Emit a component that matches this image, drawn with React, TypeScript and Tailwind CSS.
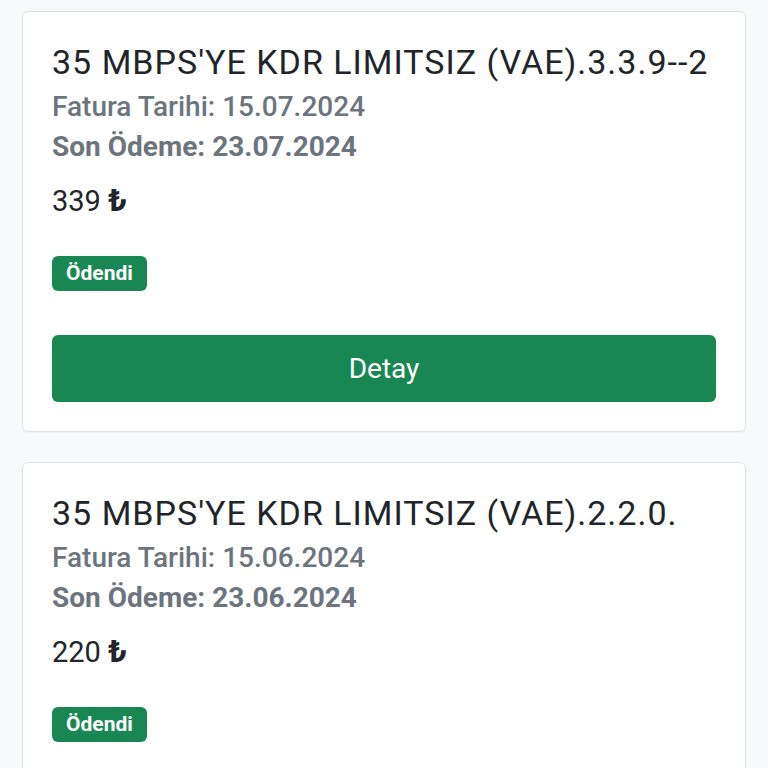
import React from "react";

type Bill = { title: string; fatura: string; son: string; amount: string };

const bills: Bill[] = [
  { title: "35 MBPS'YE KDR LIMITSIZ (VAE).3.3.9--2", fatura: "15.07.2024", son: "23.07.2024", amount: "339" },
  { title: "35 MBPS'YE KDR LIMITSIZ (VAE).2.2.0.", fatura: "15.06.2024", son: "23.06.2024", amount: "220" },
];

function Card({ b }: { b: Bill }) {
  return (
    <div className="bg-white border border-[#dee2e6] rounded-[6px] px-[29px] pt-[30px] pb-[29px] shadow-[0_1px_2px_rgba(0,0,0,0.04)]">
      <div className="text-[34px] leading-[40px] tracking-[1px] text-[#212529] whitespace-nowrap">{b.title}</div>
      <div className="mt-[5px] text-[28px] leading-[40px] font-medium text-[#6c757d]">Fatura Tarihi: {b.fatura}</div>
      <div className="text-[28px] leading-[40px] font-bold text-[#6c757d]">Son Ödeme: {b.son}</div>
      <div className="mt-[13px] text-[29px] leading-[40px] text-[#212529]">
        {b.amount} <span className="font-bold text-[32px]">₺</span>
      </div>
      <div className="mt-[35px] flex">
        <span className="inline-flex items-center h-[35px] px-[14px] rounded-[6px] bg-[#198754] text-white text-[21px] font-bold">Ödendi</span>
      </div>
      <button className="mt-[44px] w-full h-[67px] rounded-[6px] bg-[#198754] text-white text-[28px] flex items-center justify-center">Detay</button>
    </div>
  );
}

export default function App() {
  return (
    <div className="min-h-screen bg-[#f8f9fa] px-[22px] pt-[11px] flex flex-col gap-[30px]" style={{ fontFamily: "Roboto, 'Noto Sans', sans-serif" }}>
      {bills.map((b, i) => (
        <Card key={i} b={b} />
      ))}
    </div>
  );
}
